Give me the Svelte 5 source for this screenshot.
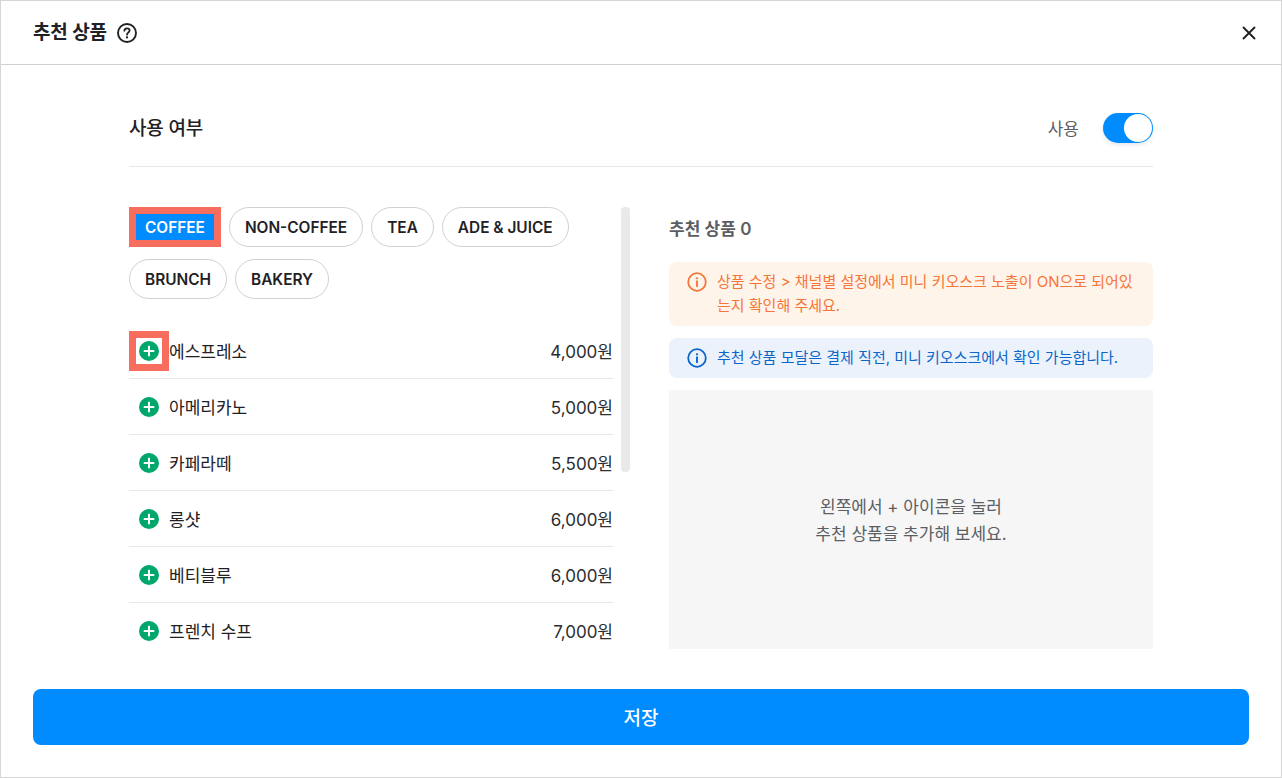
<script lang="ts">
  const categories = ['COFFEE', 'NON-COFFEE', 'TEA', 'ADE & JUICE', 'BRUNCH', 'BAKERY'];

  const products = [
    { name: '에스프레소', price: '4,000원' },
    { name: '아메리카노', price: '5,000원' },
    { name: '카페라떼', price: '5,500원' },
    { name: '롱샷', price: '6,000원' },
    { name: '베티블루', price: '6,000원' },
    { name: '프렌치 수프', price: '7,000원' },
  ];

  let enabled = $state(true);
  let selected = $state('COFFEE');
</script>

<div class="modal">
  <header class="modal-header">
    <div class="title-wrap">
      <h1>추천 상품</h1>
      <svg width="22" height="22" viewBox="0 0 22 22" fill="none" aria-hidden="true">
        <circle cx="11" cy="11" r="9" stroke="#1f2124" stroke-width="1.9"/>
        <path d="M8.4 8.7C8.5 7.2 9.6 6.3 11 6.3C12.5 6.3 13.6 7.2 13.6 8.6C13.6 9.7 13 10.2 12.1 10.8C11.3 11.3 11 11.8 11 12.7" stroke="#1f2124" stroke-width="1.8" stroke-linecap="round"/>
        <circle cx="11" cy="15.4" r="1.15" fill="#1f2124"/>
      </svg>
    </div>
    <button class="close-btn" aria-label="닫기">
      <svg width="14" height="14" viewBox="0 0 14 14" fill="none">
        <path d="M1.5 1.5L12.5 12.5M12.5 1.5L1.5 12.5" stroke="#1f2124" stroke-width="1.9" stroke-linecap="round"/>
      </svg>
    </button>
  </header>

  <main class="modal-body">
    <section class="usage">
      <h2>사용 여부</h2>
      <div class="usage-right">
        <span>사용</span>
        <button class="toggle" class:on={enabled} aria-label="사용" onclick={() => (enabled = !enabled)}>
          <span class="knob"></span>
        </button>
      </div>
    </section>

    <div class="columns">
      <div class="left">
        <div class="scroll">
          <div class="chips">
            {#each categories as c}
              <button class="chip" class:active={selected === c} onclick={() => (selected = c)}>{c}</button>
            {/each}
          </div>
          <ul class="products">
            {#each products as p, i}
              <li>
                <span class="add" class:marked={i === 0}>
                  <svg width="20" height="20" viewBox="0 0 20 20" aria-hidden="true">
                    <circle cx="10" cy="10" r="10" fill="#00a76b"/>
                    <path d="M10 5.5V14.5M5.5 10H14.5" stroke="#fff" stroke-width="2" stroke-linecap="round"/>
                  </svg>
                </span>
                <span class="name">{p.name}</span>
                <span class="price">{p.price}</span>
              </li>
            {/each}
          </ul>
        </div>
        <div class="thumb"></div>
      </div>

      <div class="right">
        <div class="count">추천 상품 0</div>
        <div class="notice warn">
          <svg width="20" height="20" viewBox="0 0 20 20" fill="none" aria-hidden="true">
            <circle cx="10" cy="10" r="8.8" stroke="currentColor" stroke-width="1.8"/>
            <path d="M10 9.2V14.2" stroke="currentColor" stroke-width="1.9" stroke-linecap="round"/>
            <circle cx="10" cy="6.3" r="1.15" fill="currentColor"/>
          </svg>
          <p>상품 수정 &gt; 채널별 설정에서 미니 키오스크 노출이 ON으로 되어있는지 확인해 주세요.</p>
        </div>
        <div class="notice info">
          <svg width="20" height="20" viewBox="0 0 20 20" fill="none" aria-hidden="true">
            <circle cx="10" cy="10" r="8.8" stroke="currentColor" stroke-width="1.8"/>
            <path d="M10 9.2V14.2" stroke="currentColor" stroke-width="1.9" stroke-linecap="round"/>
            <circle cx="10" cy="6.3" r="1.15" fill="currentColor"/>
          </svg>
          <p>추천 상품 모달은 결제 직전, 미니 키오스크에서 확인 가능합니다.</p>
        </div>
        <div class="empty">
          <p>왼쪽에서 + 아이콘을 눌러</p>
          <p>추천 상품을 추가해 보세요.</p>
        </div>
      </div>
    </div>
  </main>

  <footer class="modal-footer">
    <button class="save">저장</button>
  </footer>
</div>

<style>
  :global(body) {
    margin: 0;
    background: #fff;
    font-family: Inter, "Noto Sans CJK KR", sans-serif;
  }
  button { font-family: inherit; cursor: pointer; }
  h1, h2, p, ul { margin: 0; padding: 0; }

  .modal {
    height: 778px;
    box-sizing: border-box;
    border: 1px solid #d6d6d6;
    display: flex;
    flex-direction: column;
    overflow: hidden;
  }
  .modal-header {
    height: 64px;
    flex: none;
    box-sizing: border-box;
    border-bottom: 1px solid #cfd0d2;
    padding: 0 25px 0 32px;
    display: flex;
    align-items: center;
    justify-content: space-between;
  }
  .title-wrap { display: flex; align-items: center; gap: 9px; }
  h1 { font-size: 19px; font-weight: 600; color: #1f2124; letter-spacing: -0.2px; line-height: 26px; padding-top: 1px; }
  .close-btn {
    width: 14px; height: 14px; padding: 0; border: none; background: none;
    display: flex; align-items: center; justify-content: center;
  }

  .modal-body {
    flex: 1;
    min-height: 0;
    padding: 0 128px;
    display: flex;
    flex-direction: column;
  }
  .usage {
    height: 102px;
    flex: none;
    box-sizing: border-box;
    border-bottom: 1px solid #e6e7e9;
    padding-top: 24px;
    display: flex;
    align-items: center;
    justify-content: space-between;
  }
  h2 { font-size: 19px; font-weight: 500; color: #1f2124; letter-spacing: -0.2px; line-height: 26px; padding-top: 2px; }
  .usage-right { display: flex; align-items: center; gap: 24px; font-size: 17px; color: #5b5e63; }
  .toggle {
    width: 50px; height: 30px; padding: 1px; border: none; border-radius: 15px;
    background: #d5d7da; display: flex; box-sizing: border-box;
    box-shadow: 0 2px 4px rgba(0, 60, 120, 0.12);
  }
  .toggle.on { background: #008bff; justify-content: flex-end; }
  .knob { width: 28px; height: 28px; border-radius: 50%; background: #fff; }

  .columns {
    flex: 1;
    min-height: 0;
    padding-top: 40px;
    padding-bottom: 40px;
    display: flex;
    gap: 39px;
  }
  .left { position: relative; width: 501px; flex: none; }
  .scroll { width: 484px; height: 100%; overflow: hidden; }
  .thumb {
    position: absolute;
    top: 0; right: 0;
    width: 9px; height: 265px;
    background: #e8e9eb;
    border-radius: 4px;
  }
  .chips { display: flex; flex-wrap: wrap; gap: 12px 8px; width: 470px; }
  .chip {
    height: 40px;
    padding: 0 15px;
    box-sizing: border-box;
    border: 1px solid #d0d1d3;
    border-radius: 20px;
    background: #fff;
    font-size: 15.4px;
    font-weight: 600;
    color: #1f2124;
  }
  .chip.active {
    background: #008bff;
    color: #fff;
    border: 7px solid #f76e5f;
    border-radius: 0;
    padding: 0 9px;
  }
  .products { list-style: none; margin-top: 24px; }
  .products li {
    height: 56px;
    box-sizing: border-box;
    border-bottom: 1px solid #e6e7e9;
    display: flex;
    align-items: center;
    font-size: 17px;
    color: #1f2124;
  }
  .add {
    width: 40px; height: 40px; box-sizing: border-box; flex: none;
    display: flex; align-items: center; justify-content: center;
  }
  .add.marked { border: 7px solid #f76e5f; }
  .name { flex: 1; }
  .price { color: #2b2d31; }

  .right { flex: 1; display: flex; flex-direction: column; min-width: 0; }
  .count { height: 43px; font-size: 17px; font-weight: 600; color: #5b5e63; line-height: 45px; margin-bottom: 12px; }
  .notice {
    display: flex;
    gap: 10px;
    padding: 8px 18px;
    border-radius: 8px;
    font-size: 15px;
    line-height: 24px;
    margin-bottom: 12px;
  }
  .notice svg { flex: none; margin-top: 2px; }
  .warn { background: #fff4e9; color: #f6763a; }
  .info { background: #ebf2fc; color: #0b66c9; }
  .empty {
    flex: 1;
    background: #f6f6f6;
    display: flex;
    flex-direction: column;
    align-items: center;
    justify-content: center;
    padding-top: 2px;
    box-sizing: border-box;
    font-size: 17px;
    line-height: 27px;
    color: #5b5e63;
  }

  .modal-footer { flex: none; padding: 0 32px 32px; }
  .save {
    width: 100%;
    height: 56px;
    padding: 0 0 2px;
    border: none;
    border-radius: 8px;
    background: #008bff;
    color: #fff;
    font-size: 19px;
    font-weight: 500;
  }
</style>
